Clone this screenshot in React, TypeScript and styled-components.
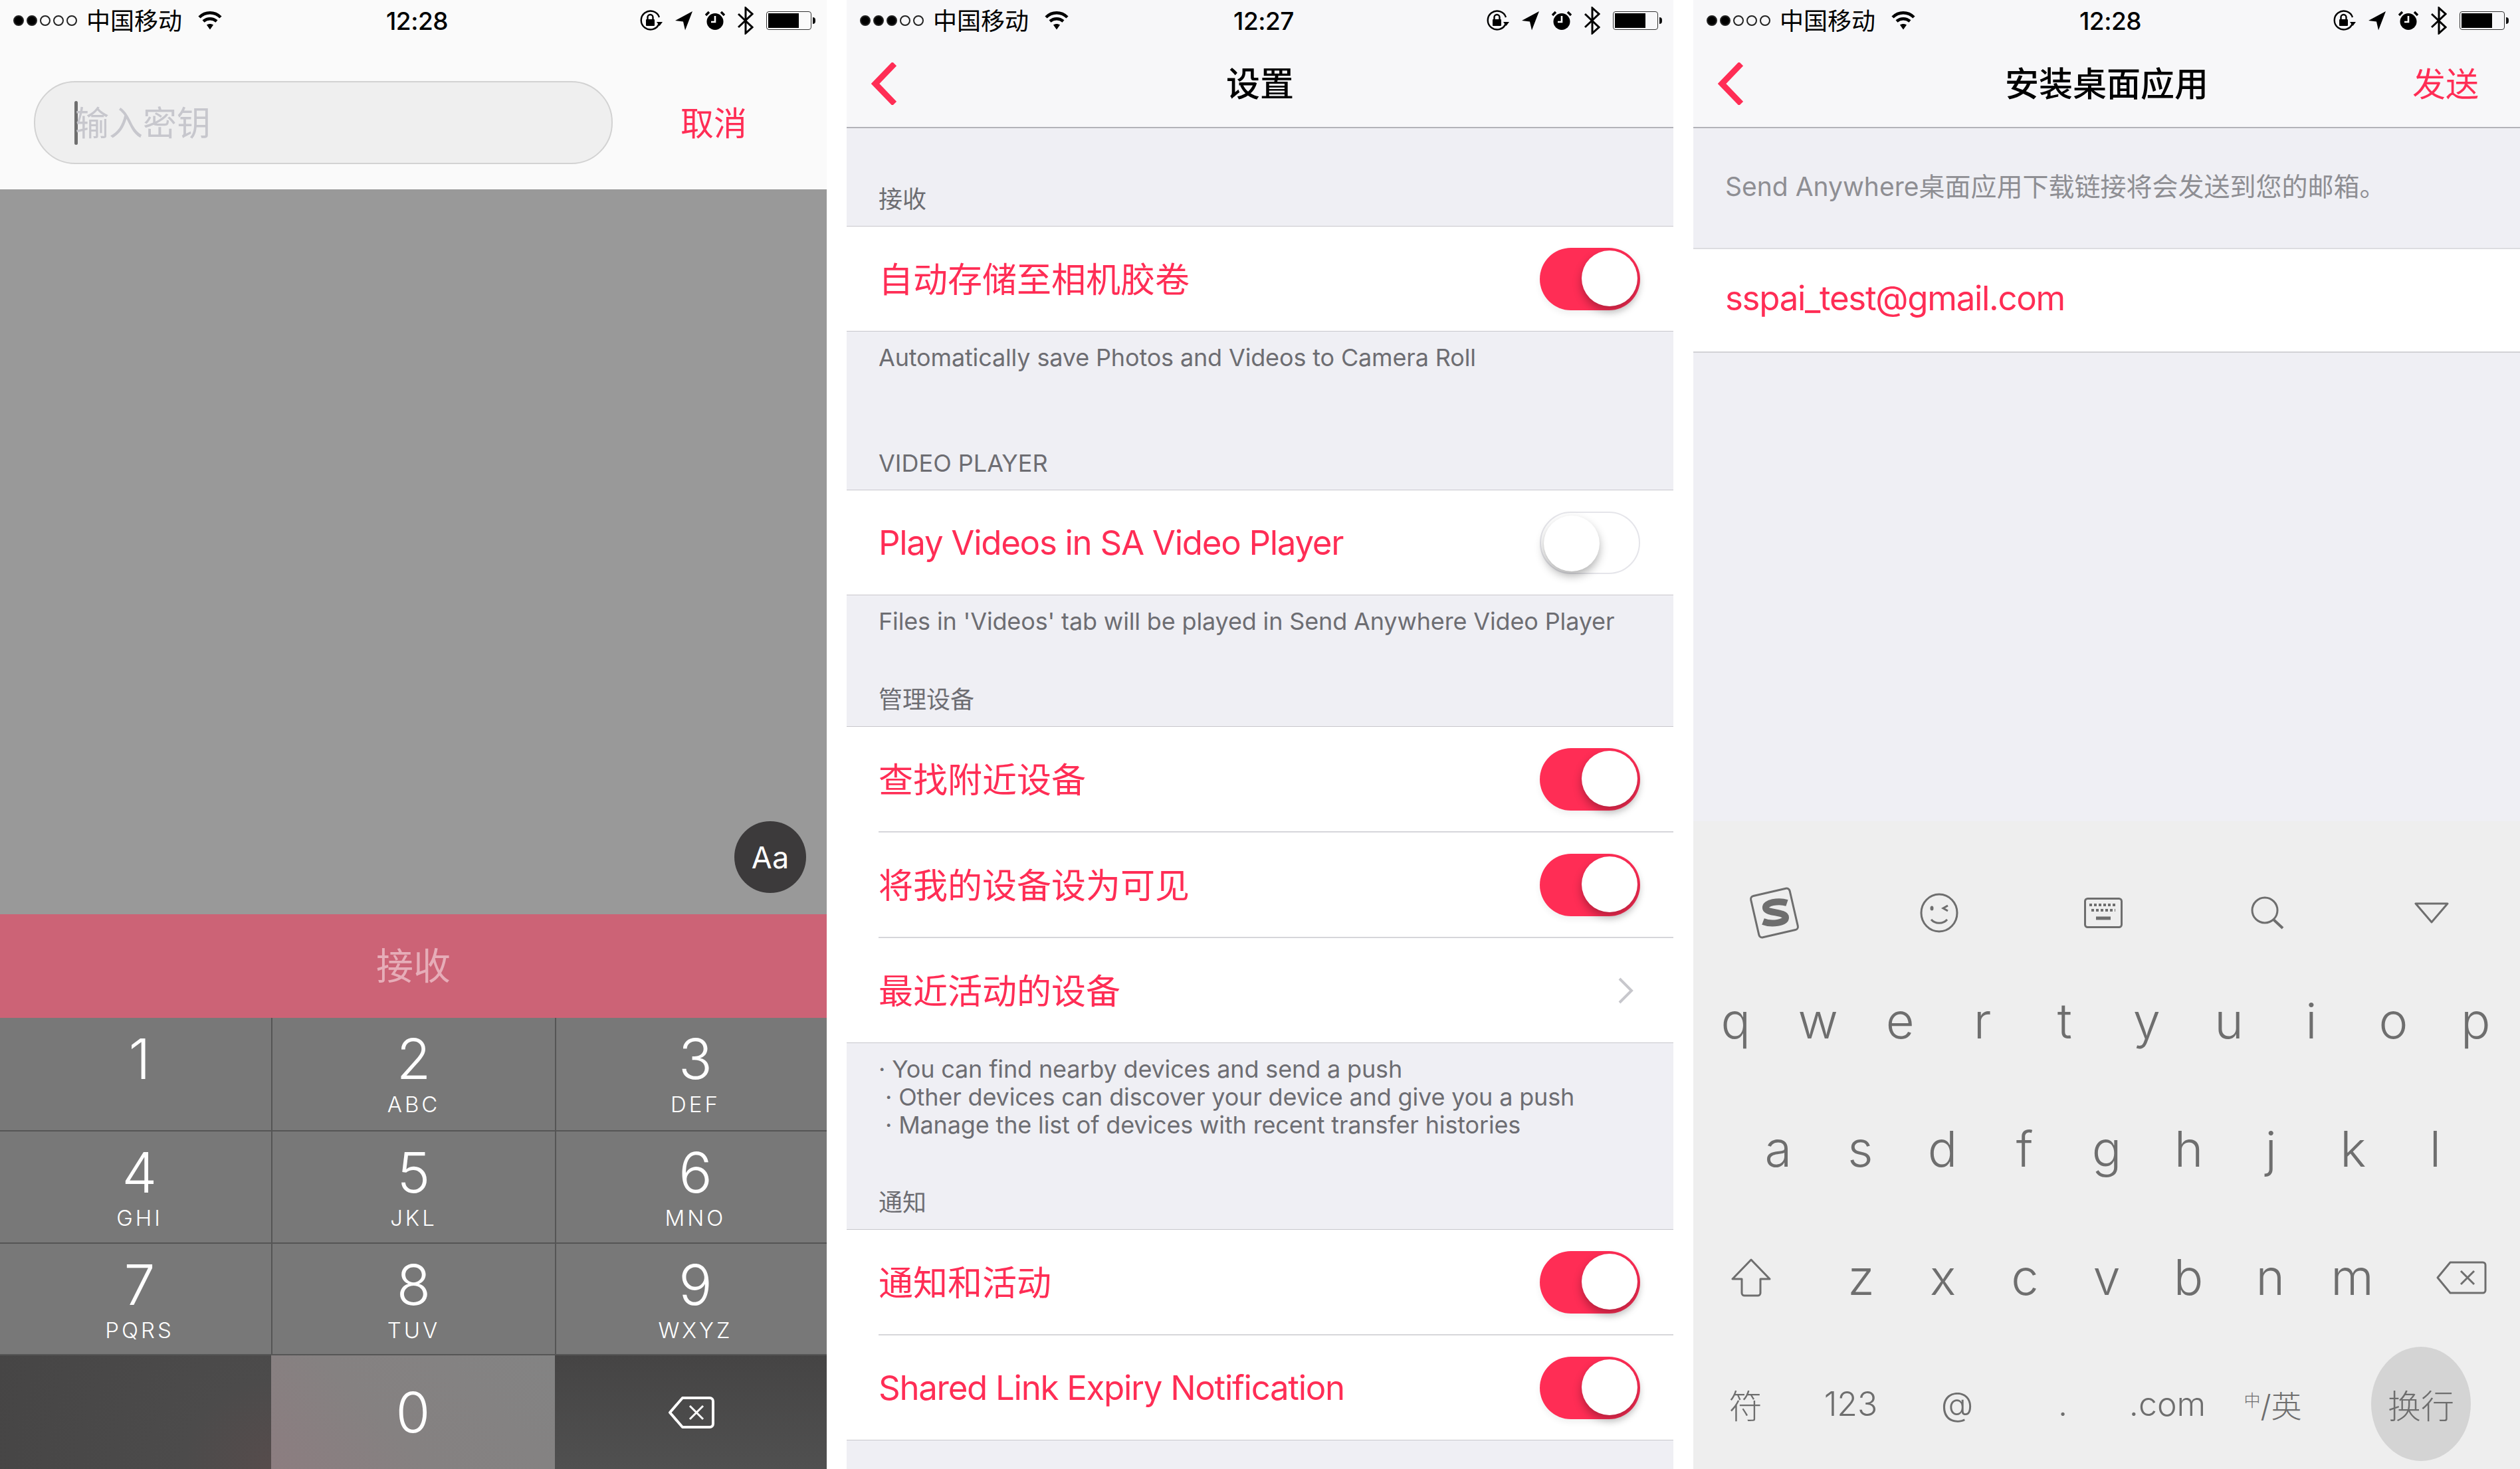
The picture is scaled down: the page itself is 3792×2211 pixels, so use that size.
import React from "react";
import styled, { createGlobalStyle } from "styled-components";

const PINK = "#ff2d55";
const FONT = `Inter, "Noto Sans CJK SC", sans-serif`;

const Global = createGlobalStyle`
  html, body { margin: 0; background: #fff; }
  * { box-sizing: border-box; }
`;

const Screens = styled.div`
  display: grid;
  grid-template-columns: 1244px 1244px 1244px;
  column-gap: 30px;
  width: 3792px;
  height: 2211px;
  overflow: hidden;
  font-family: ${FONT};
`;

const Screen = styled.section<{ $bg: string }>`
  display: flex;
  flex-direction: column;
  height: 2211px;
  background: ${(p) => p.$bg};
`;

/* status bar */
const Status = styled.div`
  display: grid;
  grid-template-columns: 1fr auto 1fr;
  align-items: center;
  height: 60px;
  padding: 0 17px 0 20px;
  color: #000;
`;
const StatusLeft = styled.div`
  display: flex;
  align-items: center;
`;
const Dot = styled.i<{ $on: boolean }>`
  width: 16px;
  height: 16px;
  margin-right: 4px;
  border-radius: 50%;
  border: 2px solid #222;
  background: ${(p) => (p.$on ? "#000" : "transparent")};
`;
const Carrier = styled.span`
  margin: 0 24px 0 10px;
  padding-top: 2px;
  font-size: 36px;
  line-height: 60px;
`;
const Clock = styled.span`
  margin-left: 8px;
  font-size: 37px;
  font-weight: 500;
  letter-spacing: -0.5px;
`;
const StatusRight = styled.div`
  display: flex;
  align-items: center;
  justify-content: flex-end;
  gap: 19px;
`;

const Wifi = () => (
  <svg width="36" height="30" viewBox="0 0 36 30" fill="none" stroke="#000" strokeWidth="4.5">
    <path d="M2 10C11 1 25 1 34 10" />
    <path d="M8 16c6-5 14-5 20 0" />
    <path d="M13 21.5l5 7 5-7c-3-2-7-2-10 0z" fill="#000" stroke="none" />
  </svg>
);
const RotationLock = () => (
  <svg width="34" height="32" viewBox="0 0 34 32" fill="none">
    <path d="M29 20A14 14 0 1 1 29 11" stroke="#000" strokeWidth="2.4" />
    <path d="M25 18h9l-4.5 6z" fill="#000" />
    <rect x="9" y="14" width="13" height="10" rx="1" fill="#000" />
    <path d="M11.5 14v-3a4 4 0 0 1 8 0v3" stroke="#000" strokeWidth="2.4" />
  </svg>
);
const LocationArrow = () => (
  <svg width="26" height="30" viewBox="0 0 26 30">
    <path d="M26 1L0 15l12 1.500 3 13z" fill="#000" />
  </svg>
);
const Alarm = () => (
  <svg width="30" height="30" viewBox="0 0 30 30">
    <circle cx="15" cy="16.500" r="12.500" fill="#000" />
    <path d="M15 8v9H9" stroke="#fff" strokeWidth="2.600" fill="none" />
    <path d="M1 7l5-5M29 7l-5-5" stroke="#000" strokeWidth="3.500" fill="none" />
  </svg>
);
const Bluetooth = () => (
  <svg width="24" height="42" viewBox="0 0 24 42" fill="none" stroke="#000" strokeWidth="3">
    <path d="M1 11l21 20-10 9V2l10 9L1 31" />
  </svg>
);
const BatteryBody = styled.div`
  display: flex;
  width: 68px;
  height: 28px;
  padding: 2px;
  border: 1.500px solid #333;
  border-radius: 4px;
`;
const BatteryFill = styled.div`
  width: 46px;
  background: #000;
`;
const BatteryNub = styled.div`
  width: 4px;
  height: 10px;
  margin-left: -17px;
  border-radius: 0 4px 4px 0;
  background: #111;
`;

const StatusBar = ({ time, signal }: { time: string; signal: number }) => (
  <Status>
    <StatusLeft>
      {[0, 1, 2, 3, 4].map((i) => (
        <Dot key={i} $on={i < signal} />
      ))}
      <Carrier>中国移动</Carrier>
      <Wifi />
    </StatusLeft>
    <Clock>{time}</Clock>
    <StatusRight>
      <RotationLock />
      <LocationArrow />
      <Alarm />
      <Bluetooth />
      <BatteryBody>
        <BatteryFill />
      </BatteryBody>
      <BatteryNub />
    </StatusRight>
  </Status>
);

/* first screen */
const SearchHead = styled.header`
  height: 285px;
  background: #fafafa;
`;
const SearchRow = styled.div`
  display: flex;
  align-items: center;
  margin-top: 62px;
  padding-left: 51px;
`;
const KeyInput = styled.div`
  display: flex;
  align-items: center;
  width: 871px;
  height: 125px;
  padding-left: 59px;
  border: 2px solid #d2d2d2;
  border-radius: 62px;
  background: #efefef;
  color: #c7c7cd;
  font-size: 51px;
`;
const Hint = styled.span`
  margin-left: -4px;
  padding-bottom: 5px;
`;
const Caret = styled.i`
  width: 5px;
  height: 66px;
  border-radius: 3px;
  background: #6e6e6e;
`;
const Cancel = styled.span`
  margin-left: 102px;
  padding-bottom: 5px;
  color: ${PINK};
  font-size: 50px;
`;
const Dimmed = styled.div`
  position: relative;
  flex: 1;
  background: #999;
`;
const FontToggle = styled.div`
  position: absolute;
  right: 31px;
  bottom: 32px;
  display: flex;
  align-items: center;
  justify-content: center;
  width: 108px;
  height: 108px;
  border-radius: 50%;
  background: #3c3a3b;
  color: #fff;
  font-size: 45px;
`;
const Submit = styled.div`
  display: flex;
  align-items: center;
  justify-content: center;
  height: 156px;
  padding-bottom: 10px;
  background: #cc6376;
  color: #e6adb8;
  font-size: 56px;
`;
const Pad = styled.div`
  display: grid;
  grid-template-columns: 408px 427px 409px;
  grid-template-rows: 171px 169px 168px 171px;
`;
const PadKey = styled.div<{ $kind?: "dark" | "left" | "zero" }>`
  display: flex;
  flex-direction: column;
  align-items: center;
  justify-content: ${(p) => (p.$kind ? "center" : "flex-start")};
  padding-top: ${(p) => (p.$kind ? 0 : 12)}px;
  color: #fff;
  border-bottom: ${(p) => (p.$kind ? "0" : "2px solid #555")};
  background: ${(p) =>
    p.$kind === "zero"
      ? "linear-gradient(45deg, #8c7d80 0%, #858181 40%, #838383 100%)"
      : p.$kind === "left"
      ? "radial-gradient(circle at 100% 100%, #564c4c 0%, #4c4b4b 30%, #464545 100%)"
      : p.$kind === "dark"
      ? "linear-gradient(180deg, #454444, #505050)"
      : "#787878"};
  &:not(:nth-child(3n + 1)) {
    border-left: ${(p) => (p.$kind ? "0" : "2px solid #555")};
  }
  &:nth-child(3n + 1),
  &:nth-child(3n) {
    padding-left: ${(p) => (p.$kind ? 0 : 12)}px;
  }
`;
const Digit = styled.span`
  font-size: 84px;
  font-weight: 300;
  line-height: 100px;
`;
const Letters = styled.span`
  margin-top: -2px;
  font-size: 33px;
  font-weight: 300;
  line-height: 40px;
  letter-spacing: 4px;
`;
const PadBackspace = () => (
  <svg width="70" height="50" viewBox="0 0 70 50" fill="none" stroke="#fff" strokeWidth="4" strokeLinejoin="round">
    <path d="M22 3h41a5 5 0 0 1 5 5v34a5 5 0 0 1-5 5H22L3 25z" />
    <path d="M33 15l20 20M53 15L33 35" strokeWidth="3" />
  </svg>
);

const padKeys = [
  ["1", ""],
  ["2", "ABC"],
  ["3", "DEF"],
  ["4", "GHI"],
  ["5", "JKL"],
  ["6", "MNO"],
  ["7", "PQRS"],
  ["8", "TUV"],
  ["9", "WXYZ"],
];

/* nav bar */
const Top = styled.header`
  height: 193px;
  border-bottom: 2px solid #b2b2b8;
  background: #f7f7f9;
`;
const Nav = styled.div`
  display: grid;
  grid-template-columns: 1fr auto 1fr;
  align-items: center;
  height: 132px;
  padding: 0 62px;
`;
const BackLink = styled.span`
  display: flex;
  margin-left: -25px;
`;
const Title = styled.h1`
  margin: 0;
  padding-bottom: 6px;
  color: #000;
  font-size: 51px;
  font-weight: 500;
`;
const NavAction = styled.span`
  justify-self: end;
  padding-bottom: 6px;
  color: ${PINK};
  font-size: 50px;
`;
const Back = () => (
  <BackLink>
    <svg width="38" height="64" viewBox="0 0 38 64" fill="none" stroke={PINK} strokeWidth="9">
      <path d="M35 2L6 32l29 30" />
    </svg>
  </BackLink>
);

/* settings list */
const SectionLabel = styled.div<{ $height: number }>`
  display: flex;
  align-items: flex-end;
  height: ${(p) => p.$height}px;
  padding: 0 48px 20px;
  color: #6d6d72;
  font-size: 36px;
  line-height: 40px;
`;
const Footnote = styled.div<{ $height: number }>`
  height: ${(p) => p.$height}px;
  padding: 18px 48px 0;
  color: #6d6d72;
  font-size: 36px;
  line-height: 42px;
  letter-spacing: -0.15px;
  white-space: pre;
`;
const Group = styled.div`
  border-top: 1px solid #c8c7cc;
  border-bottom: 1px solid #c8c7cc;
  background: #fff;
`;
const Row = styled.div`
  padding-left: 48px;
`;
const RowInner = styled.div`
  display: flex;
  align-items: center;
  justify-content: space-between;
  height: 157px;
  padding-right: 50px;
  ${Row} + ${Row} & {
    height: 159px;
    border-top: 2px solid #d6d6da;
  }
`;
const RowLabel = styled.span<{ $latin?: boolean }>`
  padding-bottom: ${(p) => (p.$latin ? 0 : 4)}px;
  color: ${PINK};
  font-size: ${(p) => (p.$latin ? 51 : 52)}px;
  letter-spacing: ${(p) => (p.$latin ? -1.3 : 0)}px;
`;
const Switch = styled.div<{ $on: boolean }>`
  display: flex;
  justify-content: ${(p) => (p.$on ? "flex-end" : "flex-start")};
  width: 151px;
  height: 94px;
  padding: 4px;
  border-radius: 47px;
  border: ${(p) => (p.$on ? "0" : "2px solid #e5e5ea")};
  background: ${(p) => (p.$on ? PINK : "#fff")};
  box-shadow: ${(p) => (p.$on ? "0 5px 10px rgba(0, 0, 0, 0.06)" : "none")};
`;
const Knob = styled.div`
  width: 84px;
  height: 84px;
  border-radius: 50%;
  background: #fff;
  box-shadow: 0 7px 14px rgba(0, 0, 0, 0.3);
`;
const Chevron = styled.svg`
  margin-right: 10px;
`;

/* third screen */
const Note = styled.div`
  display: flex;
  align-items: center;
  height: 180px;
  padding: 0 0 10px 48px;
  color: #8e8e93;
  font-size: 39px;
`;
const EmailRow = styled.div`
  display: flex;
  align-items: center;
  height: 158px;
  padding: 0 0 8px 48px;
  border-top: 2px solid #dcdce0;
  border-bottom: 2px solid #d2d2d6;
  background: #fff;
  color: ${PINK};
  font-size: 51px;
  letter-spacing: -1.3px;
`;
const Keyboard = styled.div`
  margin-top: auto;
  height: 975px;
  background: #eeeeee;
  color: #6e6e6e;
`;
const Tools = styled.div`
  display: grid;
  grid-template-columns: repeat(5, 1fr);
  align-items: center;
  justify-items: center;
  height: 208px;
  padding: 68px 10px 0 0;
`;
const KeyRow = styled.div<{ $left?: number; $right?: number }>`
  display: flex;
  height: 193px;
  padding: 0 ${(p) => p.$right ?? 0}px 0 ${(p) => p.$left ?? 0}px;
`;
const Key = styled.span`
  flex: 1;
  text-align: center;
  font-size: 74px;
  font-weight: 300;
  line-height: 185px;
`;
const SideKey = styled.span<{ $left?: number; $right?: number }>`
  display: flex;
  align-items: center;
  justify-content: center;
  width: 191px;
  height: 185px;
  padding: 0 ${(p) => p.$right ?? 0}px 0 ${(p) => p.$left ?? 0}px;
`;
const BottomRow = styled.div`
  display: flex;
  align-items: center;
  height: 188px;
  margin-top: -4px;
`;
const BottomKey = styled.span<{ $width: number; $small?: boolean }>`
  width: ${(p) => p.$width}px;
  text-align: center;
  font-size: ${(p) => (p.$small ? 46 : 50)}px;
  font-weight: 300;
`;
const Sup = styled.sup`
  font-size: 25px;
  line-height: 0;
`;
const ReturnKey = styled.span`
  display: flex;
  align-items: center;
  justify-content: center;
  width: 150px;
  height: 172px;
  margin-left: 68px;
  border-radius: 50%;
  background: #d4d4d4;
  font-size: 50px;
  font-weight: 300;
`;

const stroke = { fill: "none", stroke: "#6e6e6e" };

const SogouMark = () => (
  <svg width="80" height="78" viewBox="0 0 80 78">
    <rect x="9" y="7" width="60" height="64" rx="5" transform="rotate(-13 39 39)" {...stroke} strokeWidth="3" />
    <path d="M58 24C46 20 24 23 26 32c2 8 30 5 30 14 0 8-21 11-34 6" {...stroke} strokeWidth="10" />
  </svg>
);
const WinkFace = () => (
  <svg width="58" height="60" viewBox="0 0 58 60">
    <ellipse cx="29" cy="30" rx="27" ry="28" {...stroke} strokeWidth="3" />
    <ellipse cx="18" cy="23" rx="2.500" ry="3.500" fill="#6e6e6e" />
    <path d="M42 19l-7 4 7 4M17 40c6 7 18 7 24 0" {...stroke} strokeWidth="3" />
  </svg>
);
const KeyboardIcon = () => (
  <svg width="58" height="46" viewBox="0 0 58 46">
    <rect x="1.500" y="1.500" width="55" height="43" rx="4" {...stroke} strokeWidth="3" />
    <path d="M8 11h42M11 19h36" {...stroke} strokeWidth="4" strokeDasharray="4 3" />
    <path d="M18 31h22" {...stroke} strokeWidth="5" />
  </svg>
);
const SearchIcon = () => (
  <svg width="52" height="50" viewBox="0 0 52 50">
    <circle cx="22" cy="21" r="19" {...stroke} strokeWidth="3" />
    <path d="M35 35l14 13" {...stroke} strokeWidth="4" />
  </svg>
);
const FoldIcon = () => (
  <svg width="54" height="32" viewBox="0 0 54 32">
    <path d="M3 2h48L27 30z" {...stroke} strokeWidth="3" strokeLinejoin="round" />
  </svg>
);
const ShiftIcon = () => (
  <svg width="60" height="58" viewBox="0 0 60 58">
    <path d="M30 2L2 31h14v21a4 4 0 0 0 4 4h20a4 4 0 0 0 4-4V31h14z" {...stroke} strokeWidth="3" strokeLinejoin="round" />
  </svg>
);
const KeyBackspace = () => (
  <svg width="76" height="50" viewBox="0 0 76 50">
    <path d="M21 2h49a4 4 0 0 1 4 4v38a4 4 0 0 1-4 4H21L2 25z" {...stroke} strokeWidth="3" strokeLinejoin="round" />
    <path d="M37 15l20 20M57 15L37 35" {...stroke} strokeWidth="3" />
  </svg>
);

const App = () => (
  <Screens>
    <Global />

    <Screen $bg="#999">
      <SearchHead>
        <StatusBar time="12:28" signal={2} />
        <SearchRow>
          <KeyInput>
            <Caret />
            <Hint>输入密钥</Hint>
          </KeyInput>
          <Cancel>取消</Cancel>
        </SearchRow>
      </SearchHead>
      <Dimmed>
        <FontToggle>Aa</FontToggle>
      </Dimmed>
      <Submit>接收</Submit>
      <Pad>
        {padKeys.map(([d, l]) => (
          <PadKey key={d}>
            <Digit>{d}</Digit>
            <Letters>{l}</Letters>
          </PadKey>
        ))}
        <PadKey $kind="left" />
        <PadKey $kind="zero">
          <Digit>0</Digit>
        </PadKey>
        <PadKey $kind="dark">
          <PadBackspace />
        </PadKey>
      </Pad>
    </Screen>

    <Screen $bg="#efeff4">
      <Top>
        <StatusBar time="12:27" signal={3} />
        <Nav>
          <Back />
          <Title>设置</Title>
        </Nav>
      </Top>
      <SectionLabel $height={147}>接收</SectionLabel>
      <Group>
        <Row>
          <RowInner>
            <RowLabel>自动存储至相机胶卷</RowLabel>
            <Switch $on>
              <Knob />
            </Switch>
          </RowInner>
        </Row>
      </Group>
      <Footnote $height={158}>Automatically save Photos and Videos to Camera Roll</Footnote>
      <SectionLabel $height={80}>VIDEO PLAYER</SectionLabel>
      <Group>
        <Row>
          <RowInner>
            <RowLabel $latin>Play Videos in SA Video Player</RowLabel>
            <Switch $on={false}>
              <Knob />
            </Switch>
          </RowInner>
        </Row>
      </Group>
      <Footnote $height={117}>Files in 'Videos' tab will be played in Send Anywhere Video Player</Footnote>
      <SectionLabel $height={80}>管理设备</SectionLabel>
      <Group>
        <Row>
          <RowInner>
            <RowLabel>查找附近设备</RowLabel>
            <Switch $on>
              <Knob />
            </Switch>
          </RowInner>
        </Row>
        <Row>
          <RowInner>
            <RowLabel>将我的设备设为可见</RowLabel>
            <Switch $on>
              <Knob />
            </Switch>
          </RowInner>
        </Row>
        <Row>
          <RowInner>
            <RowLabel>最近活动的设备</RowLabel>
            <Chevron width="24" height="40" viewBox="0 0 24 40" fill="none" stroke="#c7c7cc" strokeWidth="4">
              <path d="M3 2l18 18L3 38" />
            </Chevron>
          </RowInner>
        </Row>
      </Group>
      <Footnote $height={200}>
        {"· You can find nearby devices and send a push\n · Other devices can discover your device and give you a push\n · Manage the list of devices with recent transfer histories"}
      </Footnote>
      <SectionLabel $height={80}>通知</SectionLabel>
      <Group>
        <Row>
          <RowInner>
            <RowLabel>通知和活动</RowLabel>
            <Switch $on>
              <Knob />
            </Switch>
          </RowInner>
        </Row>
        <Row>
          <RowInner>
            <RowLabel $latin>Shared Link Expiry Notification</RowLabel>
            <Switch $on>
              <Knob />
            </Switch>
          </RowInner>
        </Row>
      </Group>
    </Screen>

    <Screen $bg="#efeff4">
      <Top>
        <StatusBar time="12:28" signal={2} />
        <Nav>
          <Back />
          <Title>安装桌面应用</Title>
          <NavAction>发送</NavAction>
        </Nav>
      </Top>
      <Note>Send Anywhere桌面应用下载链接将会发送到您的邮箱。</Note>
      <EmailRow>sspai_test@gmail.com</EmailRow>
      <Keyboard>
        <Tools>
          <SogouMark />
          <WinkFace />
          <KeyboardIcon />
          <SearchIcon />
          <FoldIcon />
        </Tools>
        <KeyRow $left={2} $right={5}>
          {"qwertyuiop".split("").map((k) => (
            <Key key={k}>{k}</Key>
          ))}
        </KeyRow>
        <KeyRow $left={66} $right={66}>
          {"asdfghjkl".split("").map((k) => (
            <Key key={k}>{k}</Key>
          ))}
        </KeyRow>
        <KeyRow>
          <SideKey $right={18}>
            <ShiftIcon />
          </SideKey>
          {"zxcvbnm".split("").map((k) => (
            <Key key={k}>{k}</Key>
          ))}
          <SideKey $left={16}>
            <KeyBackspace />
          </SideKey>
        </KeyRow>
        <BottomRow>
          <BottomKey $width={157}>符</BottomKey>
          <BottomKey $width={160}>123</BottomKey>
          <BottomKey $width={160}>@</BottomKey>
          <BottomKey $width={158}>.</BottomKey>
          <BottomKey $width={157}>.com</BottomKey>
          <BottomKey $width={160} $small>
            <Sup>中</Sup>/英
          </BottomKey>
          <ReturnKey>换行</ReturnKey>
        </BottomRow>
      </Keyboard>
    </Screen>
  </Screens>
);

export default App;
